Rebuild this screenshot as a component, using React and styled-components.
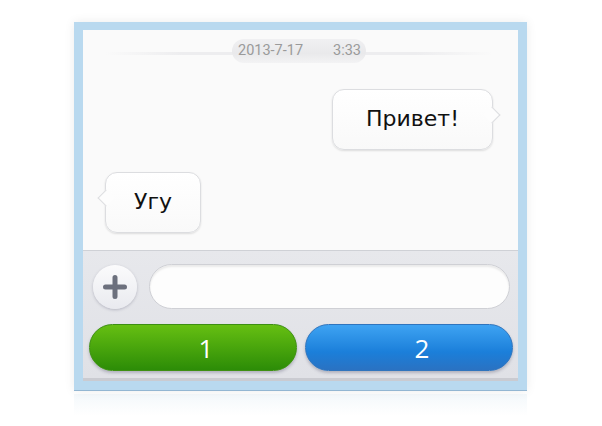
import React from "react";
import styled, { createGlobalStyle } from "styled-components";

const GlobalStyle = createGlobalStyle`
  body {
    margin: 0;
    background: #ffffff;
    font-family: "DejaVu Sans", sans-serif;
  }
`;

export default function App() {
  return (
    <Page>
      <GlobalStyle />
      <Frame>
        <ChatArea>
          <DateRow>
            <DatePill>
              <span>2013-7-17</span>
              <span>3:33</span>
            </DatePill>
          </DateRow>
          <Bubble side="right" w={161}>Привет!</Bubble>
          <Bubble side="left" w={96}>Угу</Bubble>
        </ChatArea>
        <Panel>
          <InputRow>
            <PlusButton>
              <svg width="24" height="24" viewBox="0 0 24 24">
                <path
                  d="M12 2.5v19M2.5 12h19"
                  stroke="#6c707d"
                  strokeWidth="5"
                  strokeLinecap="round"
                />
              </svg>
            </PlusButton>
            <TextInput />
          </InputRow>
          <ButtonRow>
            <ActionButton color="green">1</ActionButton>
            <ActionButton color="blue">2</ActionButton>
          </ButtonRow>
        </Panel>
      </Frame>
      <Reflection />
    </Page>
  );
}

const Page = styled.div`
  padding: 22px 0 0 74px;
  width: 453px;
`;

const Frame = styled.div`
  width: 453px;
  box-sizing: border-box;
  padding: 8px 9px 9px 9px;
  background: #b9d9ef;
  border-bottom: 1px solid #93b6d2;
  box-shadow: 0 0 10px rgba(0, 0, 0, 0.08);
  display: flex;
  flex-direction: column;
`;

const ChatArea = styled.div`
  height: 221px;
  box-sizing: border-box;
  background: #fafafa;
  padding: 9px 25px 0 22px;
  display: flex;
  flex-direction: column;
  border-bottom: 1px solid #cfd1d6;
`;

const DateRow = styled.div`
  display: flex;
  justify-content: center;
  background: linear-gradient(
    to right,
    rgba(250, 250, 250, 0),
    #ededef 20%,
    #ededef 80%,
    rgba(250, 250, 250, 0)
  );
  background-size: 100% 3px;
  background-position: 0 13px;
  background-repeat: no-repeat;
`;

const DatePill = styled.div`
  height: 24px;
  width: 134px;
  box-sizing: border-box;
  border-radius: 12px;
  background: linear-gradient(#f0f0f2, #e9e9eb 60%, #f3f3f4);
  display: flex;
  align-items: center;
  justify-content: space-between;
  padding: 0 5px 1px 6px;
  font-family: Roboto, "Noto Sans", sans-serif;
  font-size: 14.5px;
  color: #9a9a9a;
`;

const Bubble = styled.div`
  position: relative;
  align-self: ${(p) => (p.side === "right" ? "flex-end" : "flex-start")};
  margin-top: ${(p) => (p.side === "right" ? "26px" : "22px")};
  width: ${(p) => p.w}px;
  height: 61px;
  box-sizing: border-box;
  padding-bottom: 2px;
  display: flex;
  align-items: center;
  justify-content: center;
  background: linear-gradient(#ffffff, #f9f9f9);
  border: 1px solid #dcdde0;
  border-radius: 12px;
  box-shadow: 0 1px 2px rgba(0, 0, 0, 0.12);
  font-family: "DejaVu Sans", sans-serif;
  font-size: 22px;
  color: #111;

  &::after {
    content: "";
    position: absolute;
    top: 19px;
    ${(p) => (p.side === "right" ? "right: -6px;" : "left: -6px;")}
    width: 11px;
    height: 11px;
    background: #fdfdfd;
    border: 1px solid #dcdde0;
    ${(p) =>
      p.side === "right"
        ? "border-left: none; border-bottom: none;"
        : "border-right: none; border-top: none;"}
    transform: rotate(45deg);
  }
`;

const Panel = styled.div`
  height: 130px;
  box-sizing: border-box;
  background: linear-gradient(#e7e8ec, #e0e1e6);
  border-bottom: 3px solid #cacbd1;
  padding: 13px 5px 0 6px;
  display: flex;
  flex-direction: column;
  gap: 15px;
`;

const InputRow = styled.div`
  display: flex;
  align-items: center;
  gap: 12px;
  padding: 0 3px 0 4px;
  height: 45px;
`;

const PlusButton = styled.div`
  width: 44px;
  height: 44px;
  flex: none;
  border-radius: 50%;
  background: linear-gradient(#fbfbfc, #e9eaef);
  box-shadow: 0 1px 3px rgba(60, 60, 90, 0.28);
  display: flex;
  align-items: center;
  justify-content: center;
`;

const TextInput = styled.div`
  flex: 1;
  height: 45px;
  box-sizing: border-box;
  border-radius: 23px;
  background: #fdfdfd;
  border: 1px solid #cfd0d5;
  box-shadow: inset 0 2px 2px rgba(0, 0, 0, 0.08);
`;

const ButtonRow = styled.div`
  display: flex;
  gap: 8px;
`;

const ActionButton = styled.div`
  flex: 1;
  height: 47px;
  box-sizing: border-box;
  border-radius: 24px;
  display: flex;
  align-items: center;
  justify-content: center;
  padding-left: 26px;
  font-family: "Open Sans", sans-serif;
  font-size: 26px;
  color: #ffffff;
  box-shadow: 0 2px 3px rgba(40, 40, 70, 0.25);
  background: ${(p) =>
    p.color === "green"
      ? "linear-gradient(#66bf12, #2c8c07)"
      : "linear-gradient(#3ea3f2, #1b7fda 60%, #2a72c2)"};
  border: 1px solid ${(p) => (p.color === "green" ? "#3d8f12" : "#2f74bd")};
`;

const Reflection = styled.div`
  width: 453px;
  height: 22px;
  margin-top: 3px;
  background: linear-gradient(rgba(210, 228, 240, 0.25), rgba(255, 255, 255, 0));
`;
